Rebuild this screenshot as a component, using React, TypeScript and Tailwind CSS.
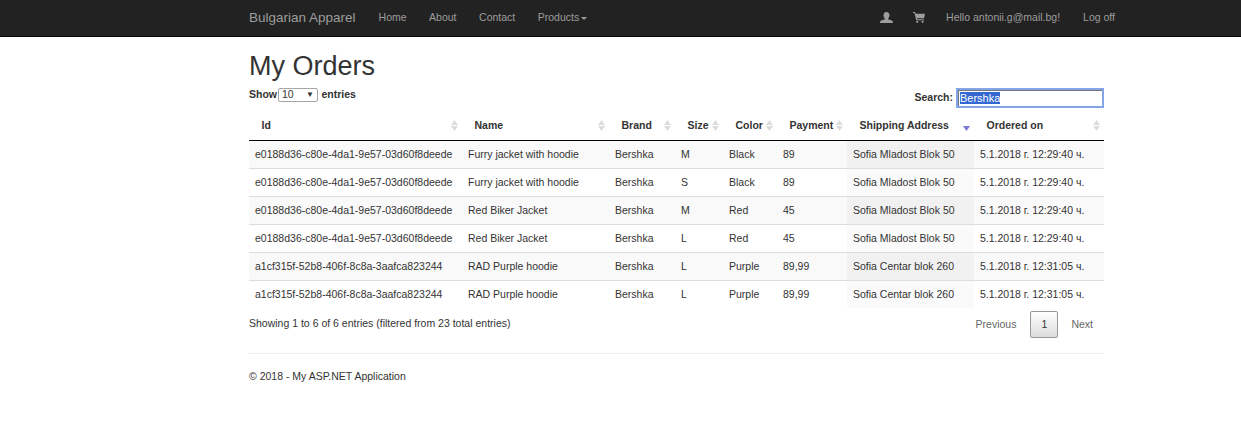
const orders = [
  ['e0188d36-c80e-4da1-9e57-03d60f8deede', 'Furry jacket with hoodie', 'Bershka', 'M', 'Black', '89', 'Sofia Mladost Blok 50', '5.1.2018 г. 12:29:40 ч.'],
  ['e0188d36-c80e-4da1-9e57-03d60f8deede', 'Furry jacket with hoodie', 'Bershka', 'S', 'Black', '89', 'Sofia Mladost Blok 50', '5.1.2018 г. 12:29:40 ч.'],
  ['e0188d36-c80e-4da1-9e57-03d60f8deede', 'Red Biker Jacket', 'Bershka', 'M', 'Red', '45', 'Sofia Mladost Blok 50', '5.1.2018 г. 12:29:40 ч.'],
  ['e0188d36-c80e-4da1-9e57-03d60f8deede', 'Red Biker Jacket', 'Bershka', 'L', 'Red', '45', 'Sofia Mladost Blok 50', '5.1.2018 г. 12:29:40 ч.'],
  ['a1cf315f-52b8-406f-8c8a-3aafca823244', 'RAD Purple hoodie', 'Bershka', 'L', 'Purple', '89,99', 'Sofia Centar blok 260', '5.1.2018 г. 12:31:05 ч.'],
  ['a1cf315f-52b8-406f-8c8a-3aafca823244', 'RAD Purple hoodie', 'Bershka', 'L', 'Purple', '89,99', 'Sofia Centar blok 260', '5.1.2018 г. 12:31:05 ч.'],
]

const columns = [
  { label: 'Id', width: 'w-[213px]' },
  { label: 'Name', width: 'w-[147px]' },
  { label: 'Brand', width: 'w-[66px]' },
  { label: 'Size', width: 'w-[48px]' },
  { label: 'Color', width: 'w-[54px]' },
  { label: 'Payment', width: 'w-[70px]' },
  { label: 'Shipping Address', width: 'w-[127px]', sorted: true },
  { label: 'Ordered on', width: 'w-[130px]' },
]

function SortIcon({ sorted }: { sorted?: boolean }) {
  return (
    <svg width="7" height="11" viewBox="0 0 7 11" className="absolute right-[4px] top-[8px]">
      {sorted ? (
        <path d="M0 6h7l-3.500 5z" fill="#7b7bd6" />
      ) : (
        <>
          <path d="M0 5l3.500-5 3.500 5z" fill="#dcdcdc" />
          <path d="M0 6h7l-3.500 5z" fill="#dcdcdc" />
        </>
      )}
    </svg>
  )
}

function UserIcon() {
  return (
    <svg width="13" height="11" viewBox="0 0 13 11" className="mt-[-2px] mr-[20px]">
      <path
        d="M6.500 0c1.900 0 3 1.300 3 3.200 0 1.300-.5 2.400-1.300 3v1l3.400 1.400c.9.400 1.400 1 1.400 2.400H0c0-1.400.5-2 1.400-2.400l3.400-1.400v-1c-.8-.6-1.300-1.700-1.300-3C3.500 1.300 4.600 0 6.500 0z"
        fill="#9d9d9d"
      />
    </svg>
  )
}

function CartIcon() {
  return (
    <svg width="12" height="11" viewBox="0 0 12 11" className="mt-[-2px] mr-[21px]">
      <path d="M0 0h2.200l.5 1.800H12l-1 4.400H4l.3 1H11v1H3.300L1.400 1H0z" fill="#9d9d9d" />
      <circle cx="4.200" cy="9.800" r="1.100" fill="#9d9d9d" />
      <circle cx="9.600" cy="9.800" r="1.100" fill="#9d9d9d" />
    </svg>
  )
}

export default function App() {
  return (
    <div className="min-h-[437px] bg-white font-['Liberation_Sans',Arial,sans-serif] text-[10.5px] text-[#333]">
      <nav className="h-[37px] border-b border-[#080808] bg-[#222]">
        <div className="ml-[249px] flex h-[36px] w-[855px] items-center text-[#9d9d9d]">
          <span className="mr-[23px] text-[13.5px]">Bulgarian Apparel</span>
          <div className="flex gap-[22.5px]">
            <span>Home</span>
            <span>About</span>
            <span>Contact</span>
            <span className="flex items-center">
              Products
              <span className="ml-[1.5px] mt-[1px] border-x-[3px] border-t-[3px] border-x-transparent border-t-[#9d9d9d]" />
            </span>
          </div>
          <div className="ml-auto mr-[-11px] flex items-center">
            <UserIcon />
            <CartIcon />
            <span className="mr-[23px]">Hello antonii.g@mail.bg!</span>
            <span>Log off</span>
          </div>
        </div>
      </nav>

      <main className="ml-[249px] w-[855px]">
        <h2 className="mt-[13px] text-[27px] leading-[32px]">My Orders</h2>
        <div className="mt-[6px] flex h-[20px] items-start justify-between font-bold">
          <label className="flex h-[14px] items-center">
            Show
            <span className="ml-[1px] mr-[3.5px] flex h-[14px] w-[40px] items-center justify-between rounded-[2px] border border-[#a6a6a6] px-[3px] font-normal">
              10
              <span className="text-[8px]">▼</span>
            </span>
            entries
          </label>
          <label className="flex h-[20px] items-center">
            Search:
            <span className="ml-[3px] flex h-[20px] w-[148px] items-center border-2 border-[#84a6e8] pl-[2px] text-[11px] font-normal shadow-[inset_1px_1px_0_#767676]">
              <span className="bg-[#3367d1] leading-[12px] text-white">Bershka</span>
            </span>
          </label>
        </div>

        <table className="mt-[4px] w-[855px] table-fixed border-collapse">
          <thead>
            <tr className="h-[28px] border-b border-black">
              {columns.map((col) => (
                <th key={col.label} className={`relative pl-[12.5px] text-left font-bold ${col.width}`}>
                  {col.label}
                  <SortIcon sorted={col.sorted} />
                </th>
              ))}
            </tr>
          </thead>
          <tbody>
            {orders.map((row, i) => (
              <tr key={i} className={i < 5 ? 'h-[28px] border-b border-[#ddd]' : 'h-[28px]'}>
                {row.map((cell, j) => (
                  <td
                    key={j}
                    className={`whitespace-nowrap pl-[6px] pt-[1px] ${
                      j === 6 ? (i % 2 === 0 ? 'bg-[#f1f1f1]' : 'bg-[#fafafa]') : i % 2 === 0 ? 'bg-[#f9f9f9]' : ''
                    }`}
                  >
                    {cell}
                  </td>
                ))}
              </tr>
            ))}
          </tbody>
        </table>

        <div className="flex h-[30px] items-start justify-between">
          <span className="mt-[8px]">Showing 1 to 6 of 6 entries (filtered from 23 total entries)</span>
          <div className="mt-[3px] flex items-center text-[#666]">
            <span className="pl-[11px] pr-[14px]">Previous</span>
            <span className="flex h-[27px] w-[28px] items-center justify-center rounded-[2px] border border-[#979797] bg-gradient-to-b from-white to-[#dcdcdc] text-[#333]">
              1
            </span>
            <span className="pl-[13px] pr-[11px]">Next</span>
          </div>
        </div>

        <hr className="mt-[15px] border-[#eee]" />
        <footer className="mt-[16px] leading-[12px]">© 2018 - My ASP.NET Application</footer>
      </main>
    </div>
  )
}
